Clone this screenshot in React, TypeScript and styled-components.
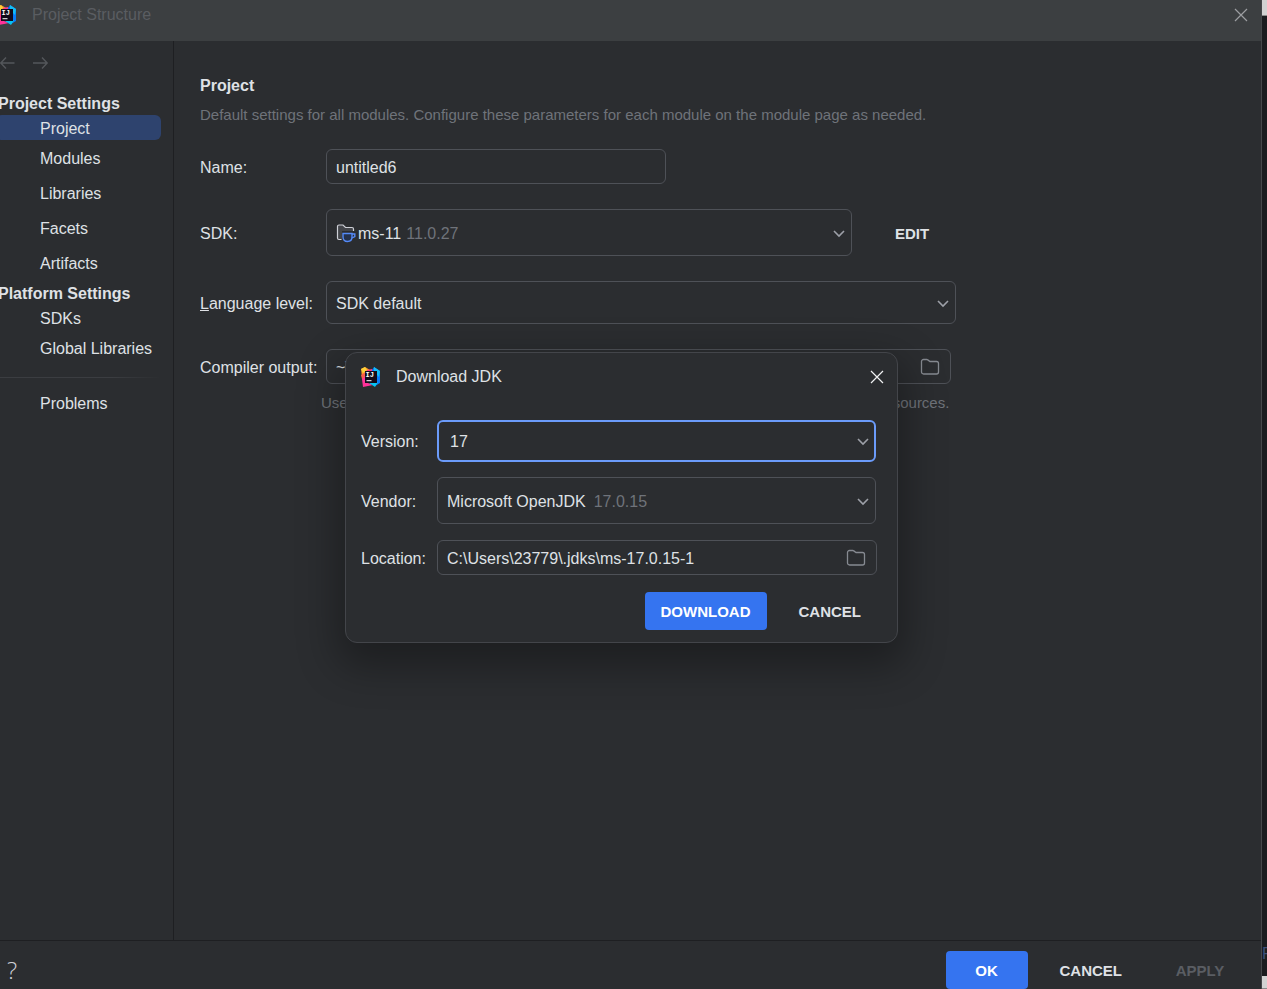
import React from "react";
import styled, { createGlobalStyle } from "styled-components";

const GlobalStyle = createGlobalStyle`
  *, *::before, *::after { box-sizing: border-box; }
  body {
    margin: 0;
    background: #1b1c1f;
    color: #dfe1e5;
    font-family: "Liberation Sans", Arial, sans-serif;
    font-size: 16px;
    line-height: 20px;
  }
  h1, h2, h3, p, ul { margin: 0; padding: 0; font-size: 16px; }
  ul { list-style: none; }
  button, input, select { font: inherit; color: inherit; }
`;

const Screen = styled.div`
  display: flex;
  min-height: 100vh;
  overflow: hidden;
`;

const Window = styled.div`
  position: relative;
  flex: 1;
  min-width: 0;
  display: flex;
  flex-direction: column;
  margin-left: -4px;
  background: #2b2d30;
`;

const Backdrop = styled.div`
  width: 6px;
  display: flex;
  flex-direction: column;
  overflow: hidden;
  border-left: 1px solid #45474a;
`;

const BackdropBar = styled.div<{ $size: number }>`
  flex: 0 0 ${(p) => p.$size}px;
  background: #d2d2d2;
  border-bottom: 1px solid #8a8a8a;
`;

const BackdropBody = styled.div`
  flex: 1;
  display: flex;
  align-items: flex-end;
  padding-bottom: 12px;
  color: #3d4f78;
`;

const TitleBar = styled.header`
  display: flex;
  align-items: center;
  height: 41px;
  padding: 0 13px 11px 1px;
  background: #3c3f41;
`;

const WindowTitle = styled.h1`
  flex: 1;
  margin-left: 15px;
  font-weight: 400;
  color: #5a5d61;
`;

const IconButton = styled.button`
  display: flex;
  align-items: center;
  justify-content: center;
  padding: 0;
  border: 0;
  background: transparent;
`;

const Body = styled.div`
  flex: 1;
  display: flex;
`;

const Sidebar = styled.nav`
  flex: 0 0 178px;
  border-right: 1px solid #1e1f22;
`;

const History = styled.div`
  display: flex;
  gap: 17px;
  height: 49px;
  padding: 14px 0 0 4px;
  align-items: flex-start;
  color: #54575b;
`;

const GroupTitle = styled.h2`
  height: 25px;
  padding: 1px 0 0 2px;
  line-height: 25px;
`;

const NavItem = styled.li<{ $tall?: boolean }>`
  height: ${(p) => (p.$tall ? 35 : 25)}px;
  display: flex;
  margin-right: 12px;
`;

const NavLink = styled.a<{ $selected?: boolean }>`
  flex: 1;
  display: flex;
  align-items: center;
  padding: 2px 0 0 44px;
  border-radius: 6px;
  color: inherit;
  text-decoration: none;
  background: ${(p) => (p.$selected ? "#2e436e" : "transparent")};
`;

const Divider = styled.div`
  height: 1px;
  margin: 12px 12px 12px 0;
  background: linear-gradient(90deg, #3b3d41 70%, #2b2d30);
`;

const Main = styled.main`
  flex: 1;
  min-width: 0;
  padding: 35px 26px;
`;

const Hint = styled.p<{ $indent?: boolean }>`
  margin: ${(p) => (p.$indent ? "9px 0 0 121px" : "9px 0 24px")};
  font-size: 15px;
  color: #6f737a;
`;

const Row = styled.div<{ $gap: number; $label: number }>`
  display: flex;
  align-items: center;
  margin-top: ${(p) => p.$gap}px;
  > label {
    flex: 0 0 ${(p) => p.$label}px;
    padding-top: 2px;
  }
`;

const Field = styled.div<{ $width?: number; $height: number; $focus?: boolean }>`
  flex: ${(p) => (p.$width ? `0 1 ${p.$width}px` : "1")};
  min-width: 0;
  height: ${(p) => p.$height}px;
  display: flex;
  align-items: center;
  padding: 0 ${(p) => (p.$focus ? "5px 0 11px" : "6px 0 9px")};
  border: ${(p) => (p.$focus ? "2px solid #6b9bfa" : "1px solid #4e5157")};
  border-radius: 6px;
`;

const TextInput = styled.input`
  flex: 1;
  min-width: 0;
  padding: 2px 0 0;
  border: 0;
  outline: 0;
  background: transparent;
`;

const Select = styled.select<{ $fit?: boolean }>`
  appearance: none;
  flex: ${(p) => (p.$fit ? "none" : "1")};
  field-sizing: ${(p) => (p.$fit ? "content" : "fixed")};
  min-width: 0;
  padding: 2px 0 0;
  border: 0;
  outline: 0;
  background: transparent;
`;

const Version = styled.span<{ $gap: number }>`
  flex: 1;
  padding-top: 2px;
  margin-left: ${(p) => p.$gap}px;
  color: #6f737a;
`;

const BrowseButton = styled(IconButton)`
  margin-right: 4px;
`;

const Button = styled.button<{ $primary?: boolean; $min?: number }>`
  height: 38px;
  min-width: ${(p) => p.$min ?? 0}px;
  padding: 2px 16px 0;
  border: 0;
  border-radius: 4px;
  font-size: 15px;
  font-weight: 700;
  color: ${(p) => (p.$primary ? "#ffffff" : "#dfe1e5")};
  background: ${(p) => (p.$primary ? "#3574f0" : "transparent")};
  &:disabled { color: #5a5d63; }
`;

const EditButton = styled(Button)`
  margin-left: 27px;
`;

const Footer = styled.footer`
  display: flex;
  align-items: center;
  gap: 16px;
  padding: 10px 15px 0 8px;
  border-top: 1px solid #1e1f22;
`;

const Help = styled(IconButton)`
  width: 16px;
  margin-right: auto;
  font-family: "Open Sans", sans-serif;
  font-size: 24px;
  font-weight: 300;
  color: #ced0d6;
`;

const Dialog = styled.section`
  position: absolute;
  top: 352px;
  left: 349px;
  width: 553px;
  padding: 14px 20px 12px 15px;
  border: 1px solid #43454a;
  border-radius: 12px;
  background: #2b2d30;
  box-shadow: 0 16px 40px 8px rgba(0, 0, 0, 0.32);
`;

const DialogHead = styled.div`
  display: flex;
  align-items: center;
  margin: 0 -7px 33px 0;
`;

const DialogTitle = styled.h2`
  flex: 1;
  margin-left: 15px;
  font-weight: 400;
`;

const Actions = styled.div`
  display: flex;
  justify-content: flex-end;
  gap: 16px;
  margin-top: 17px;
`;

function Logo() {
  return (
    <svg width="20" height="20" viewBox="0 0 20 20" aria-hidden="true">
      <path d="M0 2 4 0l5 3-3 6-5 1z" fill="#ff9b26" />
      <path d="M0 2 4 0l2 3-4 3z" fill="#fdd13a" />
      <path d="M0 8 5 5l6-2v6l-6 4-4-1z" fill="#fc5a4b" />
      <path d="M1 12 5 9l2 7 5 2-5 1-5 1z" fill="#ff3298" />
      <path d="M6 3 11 2l2 3-7 1z" fill="#fc3d8b" />
      <path d="M11 3 13 0l6 4v12l-5 3-5-3z" fill="#087cfa" />
      <path d="M13 0 19 4l-1 6-5-5z" fill="#12bdf5" />
      <path d="m8 16 9-1-3 5z" fill="#07c3f2" />
      <path d="M4 4h12v12H4z" fill="#120b1a" />
      <text x="4.500" y="9.500" fontFamily="Liberation Mono" fontWeight="700" fontSize="7" fill="#fff">IJ</text>
      <path d="M5.500 13.200h5v1h-5z" fill="#fff" />
    </svg>
  );
}

function Close({ color }: { color: string }) {
  return (
    <svg width="14" height="14" viewBox="0 0 14 14" stroke={color} strokeWidth="1.200" aria-hidden="true">
      <path d="m1 1 12 12M13 1 1 13" />
    </svg>
  );
}

function Arrow({ back }: { back?: boolean }) {
  return (
    <svg width="16" height="16" viewBox="0 0 16 16" fill="none" stroke="currentColor" strokeWidth="1.400" aria-hidden="true">
      <path d={back ? "M14.500 8H.8M6 2.500.8 8 6 13.500" : "M0 8h14.200M9 2.500 14.200 8 9 13.500"} />
    </svg>
  );
}

const ChevronIcon = styled.svg`
  flex: none;
  pointer-events: none;
`;

function Chevron() {
  return (
    <ChevronIcon width="12" height="10" viewBox="0 0 12 10" fill="none" stroke="#9da0a8" strokeWidth="1.600" aria-hidden="true">
      <path d="m1 3 5 5 5-5" />
    </ChevronIcon>
  );
}

function Folder() {
  return (
    <svg width="20" height="18" viewBox="0 0 20 18" fill="none" stroke="#868a91" strokeWidth="1.300" aria-hidden="true">
      <path d="M1.500 14V3.500a2 2 0 0 1 2-2h3.300a1.500 1.500 0 0 1 1 .4L10 3.500h6.500a2 2 0 0 1 2 2V14a2 2 0 0 1-2 2h-13a2 2 0 0 1-2-2z" />
    </svg>
  );
}

const JdkSvg = styled.svg`
  flex: none;
  margin-right: 2px;
`;

function JdkIcon() {
  return (
    <JdkSvg width="20" height="20" viewBox="0 0 20 20" fill="none" aria-hidden="true">
      <path d="M6 16.500H3A1.500 1.500 0 0 1 1.500 15V3.500A1.500 1.500 0 0 1 3 2h4l2.500 2.500H16A1.500 1.500 0 0 1 17.500 6v2H6z" fill="#43454a" />
      <path d="M5.500 16.500H3A1.500 1.500 0 0 1 1.500 15V3.500A1.500 1.500 0 0 1 3 2h4l2.500 2.500H16A1.500 1.500 0 0 1 17.500 6v2" stroke="#ced0d6" strokeWidth="1.200" />
      <path d="M7 10.500h9V14c0 2.500-1.500 4.500-4.500 4.500S7 16.500 7 14z" fill="#25324d" stroke="#548af7" strokeWidth="1.400" />
      <path d="M16 11h2.800v2.500L16 15" stroke="#548af7" strokeWidth="1.400" />
    </JdkSvg>
  );
}

const projectItems = ["Project", "Modules", "Libraries", "Facets", "Artifacts"];

export default function App() {
  return (
    <>
      <GlobalStyle />
      <Screen>
        <Window>
          <TitleBar>
            <Logo />
            <WindowTitle>Project Structure</WindowTitle>
            <IconButton aria-label="Close"><Close color="#9c9ea1" /></IconButton>
          </TitleBar>
          <Body>
            <Sidebar>
              <History>
                <IconButton aria-label="Back"><Arrow back /></IconButton>
                <IconButton aria-label="Forward"><Arrow /></IconButton>
              </History>
              <GroupTitle>Project Settings</GroupTitle>
              <ul>
                {projectItems.map((name, i) => (
                  <NavItem key={name} $tall={i > 0}>
                    <NavLink href="#" $selected={i === 0}>{name}</NavLink>
                  </NavItem>
                ))}
              </ul>
              <GroupTitle>Platform Settings</GroupTitle>
              <ul>
                <NavItem><NavLink href="#">SDKs</NavLink></NavItem>
                <NavItem $tall><NavLink href="#">Global Libraries</NavLink></NavItem>
              </ul>
              <Divider />
              <ul>
                <NavItem><NavLink href="#">Problems</NavLink></NavItem>
              </ul>
            </Sidebar>
            <Main>
              <h2>Project</h2>
              <Hint>Default settings for all modules. Configure these parameters for each module on the module page as needed.</Hint>
              <Row $gap={0} $label={126}>
                <label htmlFor="name">Name:</label>
                <Field $width={340} $height={35}><TextInput id="name" defaultValue="untitled6" /></Field>
              </Row>
              <Row $gap={25} $label={126}>
                <label htmlFor="sdk">SDK:</label>
                <Field $width={526} $height={47}>
                  <JdkIcon />
                  <Select id="sdk" $fit><option>ms-11</option></Select>
                  <Version $gap={5}>11.0.27</Version>
                  <Chevron />
                </Field>
                <EditButton>EDIT</EditButton>
              </Row>
              <Row $gap={25} $label={126}>
                <label htmlFor="level"><u>L</u>anguage level:</label>
                <Field $width={630} $height={43}>
                  <Select id="level"><option>SDK default</option></Select>
                  <Chevron />
                </Field>
              </Row>
              <Row $gap={25} $label={126}>
                <label htmlFor="output">Compiler output:</label>
                <Field $width={625} $height={35}>
                  <TextInput id="output" defaultValue="~\IdeaProjects\untitled6\out" />
                  <BrowseButton aria-label="Browse output"><Folder /></BrowseButton>
                </Field>
              </Row>
              <Hint $indent>Used for module subdirectories, Production and Test directories for the corresponding sources.</Hint>
            </Main>
          </Body>
          <Footer>
            <Help aria-label="Help">?</Help>
            <Button $primary $min={82}>OK</Button>
            <Button>CANCEL</Button>
            <Button disabled $min={92}>APPLY</Button>
          </Footer>
          <Dialog role="dialog" aria-labelledby="jdk-title">
            <DialogHead>
              <Logo />
              <DialogTitle id="jdk-title">Download JDK</DialogTitle>
              <IconButton aria-label="Close dialog"><Close color="#f0f1f2" /></IconButton>
            </DialogHead>
            <Row $gap={0} $label={76}>
              <label htmlFor="version">Version:</label>
              <Field $width={439} $height={42} $focus>
                <Select id="version"><option>17</option></Select>
                <Chevron />
              </Field>
            </Row>
            <Row $gap={15} $label={76}>
              <label htmlFor="vendor">Vendor:</label>
              <Field $width={439} $height={47}>
                <Select id="vendor" $fit><option>Microsoft OpenJDK</option></Select>
                <Version $gap={8}>17.0.15</Version>
                <Chevron />
              </Field>
            </Row>
            <Row $gap={16} $label={76}>
              <label htmlFor="location">Location:</label>
              <Field $height={35}>
                <TextInput id="location" defaultValue="C:\Users\23779\.jdks\ms-17.0.15-1" />
                <BrowseButton aria-label="Browse location"><Folder /></BrowseButton>
              </Field>
            </Row>
            <Actions>
              <Button $primary>DOWNLOAD</Button>
              <Button>CANCEL</Button>
            </Actions>
          </Dialog>
        </Window>
        <Backdrop aria-hidden="true">
          <BackdropBar $size={16} />
          <BackdropBody>F</BackdropBody>
          <BackdropBar $size={13} />
        </Backdrop>
      </Screen>
    </>
  );
}
